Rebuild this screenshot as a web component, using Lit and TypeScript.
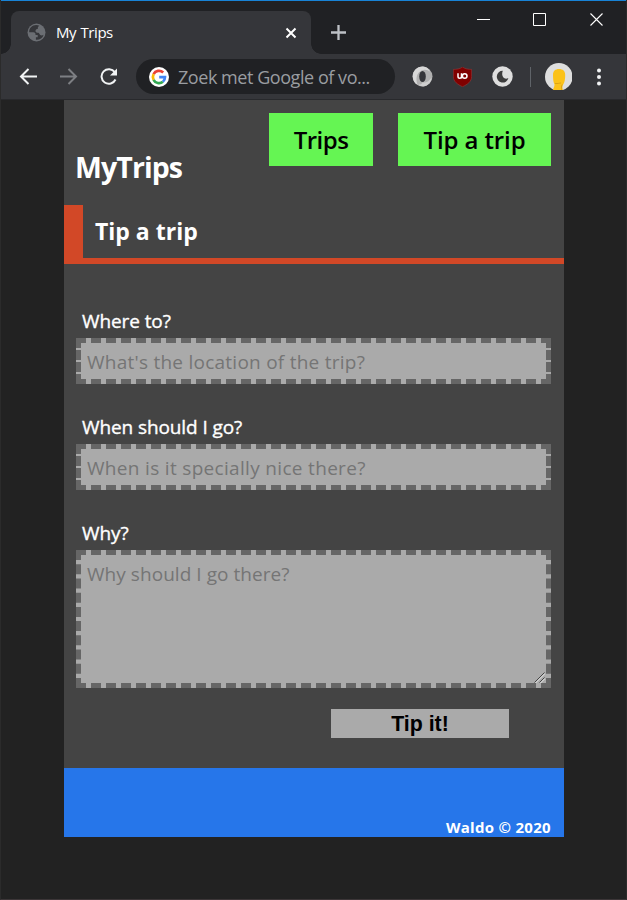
import { LitElement, html, css } from "lit";
import { customElement } from "lit/decorators.js";

@customElement("browser-bar")
class BrowserBar extends LitElement {
  static styles = css`
    :host { display: block; font-family: "Open Sans", "Noto Sans", sans-serif; color: #fff; }
    svg { display: block; flex: none; }
    .strip { height: 53px; border-top: 1px solid #1883d7; background: #202124; display: flex; }
    .tab {
      width: 300px; height: 43px; margin: 10px 0 0 10px; background: #35363a;
      border-radius: 8px 8px 0 0; position: relative; display: flex; align-items: center;
      box-sizing: border-box; padding: 0 14px 0 16px;
    }
    .tab::before, .tab::after {
      content: ""; position: absolute; bottom: 0; width: 10px; height: 10px;
    }
    .tab::before { left: -10px; background: radial-gradient(circle at 0 0, #202124 9.5px, #35363a 10px); }
    .tab::after { right: -10px; background: radial-gradient(circle at 100% 0, #202124 9.5px, #35363a 10px); }
    .title { flex: 1; margin-left: 10px; font-size: 15px; letter-spacing: -0.45px; word-spacing: 1px; line-height: 20px; margin-top: -2px; }
    .plus { margin: 23px 0 0 19px; }
    .win { display: flex; margin: 11px 21px 0 auto; gap: 43px; }
    .win svg { margin-left: -1px; margin-right: 1px; }
    .tools { height: 45px; border-bottom: 1px solid #28292c; background: #35363a; display: flex; align-items: center; }
    .back { margin-left: 18px; }
    .fwd { margin-left: 21px; }
    .reload { margin-left: 21px; }
    .omni {
      margin-left: 17px; width: 259px; height: 35px; border-radius: 18px; background: #202124;
      display: flex; align-items: center; box-sizing: border-box; padding-left: 13px;
      font-size: 18px; color: #9a9da1; white-space: nowrap; letter-spacing: -0.45px;
    }
    .query { margin-left: 9px; line-height: 24px; }
    .ext1 { margin-left: 17px; }
    .ext2, .ext3 { margin-left: 20px; }
    .sep { width: 1px; height: 20px; background: #5f6368; margin-left: 17px; }
    .avatar { margin-left: 14px; }
    .menu { margin-left: 24px; }
  `;

  render() {
    return html`
      <div class="strip">
        <div class="tab">
          <svg width="19" height="19" viewBox="0 0 19 19">
            <circle cx="9.5" cy="9.5" r="9" fill="#6b6e73" />
            <path d="M4 4.2C2.6 5.6 2 7.4 2.2 9.3h4.1c1.7 0 2.4 1.2 2.2 2.6h2.2v2.4H8.9v2.5c3.6.3 6.8-1.7 7.7-5.1-1.2 1-2.5.9-3.4.3-.9-.7-.8-2-1.9-2.2-1.8-.2-2.9-.7-2.8-2.1.1-1.3 1-1.8 2.3-1.8-.1-1.7.4-2.5 1.6-3.2C9.5 1.5 6.1 2 4 4.2z" fill="#35363a" />
          </svg>
          <span class="title">My Trips</span>
          <svg width="12" height="12" viewBox="0 0 12 12" stroke="#fff" stroke-width="2">
            <path d="M1.5 1.5l9 9M10.5 1.5l-9 9" />
          </svg>
        </div>
        <svg class="plus" width="17" height="17" viewBox="0 0 17 17" stroke="#bdc1c6" stroke-width="2.300" fill="none">
          <path d="M8.5 1v15M1 8.500h15" />
        </svg>
        <div class="win">
          <svg width="13" height="13" stroke="#fff" fill="none"><path d="M0 7.500h13" /></svg>
          <svg width="13" height="14" stroke="#fff" fill="none"><path d="M.5 1.500h12v12H.5z" /></svg>
          <svg width="15" height="14" stroke="#fff" stroke-width="1.1" fill="none"><path d="M1.500 1.500l12 12M13.500 1.500l-12 12" /></svg>
        </div>
      </div>
      <div class="tools">
        <svg class="back" width="19" height="17" viewBox="0 0 19 17" stroke="#f1f3f4" stroke-width="2" fill="none">
          <path d="M18 8.500H2.500M9.500 1L2 8.500l7.500 7.500" />
        </svg>
        <svg class="fwd" width="19" height="17" viewBox="0 0 19 17" stroke="#7d7f83" stroke-width="2" fill="none">
          <path d="M1 8.500h15.500M9.500 1L17 8.500 9.500 16" />
        </svg>
        <svg class="reload" width="20" height="18" viewBox="0 0 20 18">
          <path d="M15.800 4.200A7.300 7.300 0 1 0 16.500 11.500" stroke="#f1f3f4" stroke-width="2" fill="none" />
          <path d="M18 .5v7h-7z" fill="#f1f3f4" />
        </svg>
        <div class="omni">
          <svg width="20" height="20" viewBox="0 0 20 20">
            <circle cx="10" cy="10" r="10" fill="#fff" />
            <g fill="none" stroke-width="2.700">
              <path d="M14.200 5.400A6.100 6.100 0 0 0 4.600 7.200" stroke="#ea4335" />
              <path d="M4.600 7.200a6.100 6.100 0 0 0 0 5.600" stroke="#fbbc05" />
              <path d="M4.600 12.800a6.100 6.100 0 0 0 9.300 2" stroke="#34a853" />
              <path d="M13.900 14.800c1.500-1.200 2.100-2.800 2.100-4.700h-5.800" stroke="#4285f4" />
            </g>
          </svg>
          <span class="query">Zoek met Google of vo...</span>
        </div>
        <svg class="ext1" width="21" height="21" viewBox="0 0 21 21">
          <circle cx="10.500" cy="10.500" r="10" fill="#b0b0b0" />
          <path d="M11 .5C4.500 .5 .8 5 .8 10.500c0 4 2 7 5 8.500-2.500-5-1.500-12 3.700-14.500 3.200-1.300 7-.5 8.500 1.300C16.500 2.500 14.500 .8 11 .5z" fill="#d8d8d8" />
          <path d="M10.500 16.500c4 .5 7-1.500 9-5-.2 4.500-3.500 8.300-8 9-2 0-4-.8-5-2 1.500 0 3 .2 4-2z" fill="#cfcfcf" />
          <ellipse cx="10.500" cy="10.500" rx="3.300" ry="5.500" fill="#35363a" />
        </svg>
        <svg class="ext2" width="19" height="20" viewBox="0 0 19 20">
          <path d="M9.500 0C7 1.900 3.500 2.400 .4 2.400v7.200c0 5 4.300 8 9.100 10.100 4.800-2.100 9.100-5.100 9.100-10.100V2.400C15.500 2.400 12 1.900 9.500 0z" fill="#800000" stroke="#a33b3b" stroke-width=".5" />
          <path d="M5 6.300v3.200a1.750 1.750 0 0 0 3.500 0M8.500 6.300v5.200" fill="none" stroke="#fff" stroke-width="1.500" />
          <circle cx="11.700" cy="9" r="2.300" fill="none" stroke="#fff" stroke-width="1.500" />
        </svg>
        <svg class="ext3" width="21" height="21" viewBox="0 0 21 21">
          <circle cx="10.500" cy="10.500" r="10.200" fill="#dedede" />
          <path d="M10.800 4.800a5.900 5.900 0 1 0 5.600 7.300c-2.200 1-4 .6-5.200-.8-1.300-1.700-1.300-4-.4-6.500z" fill="#3c3c3c" />
        </svg>
        <span class="sep"></span>
        <svg class="avatar" width="27" height="27" viewBox="0 0 27 27">
          <circle cx="13.800" cy="13.800" r="13.800" fill="#dedede" />
          <path d="M8 12c0-4 2.200-6 6-6s6.300 2 6.200 6c0 4-.5 7.500-2 9.500-1 1.500-1 3.500-.4 5.500H8c.5-2 1.500-3.500 1.500-5.500C8.300 19 8 15.500 8 12z" fill="#fbc219" />
          <path d="M10 20.500h3c1 0 1.500-.5 3-.5M17.200 21.500c-1 1.500-.8 3.500-.4 5.500" fill="none" stroke="#dca313" />
        </svg>
        <svg class="menu" width="6" height="18" viewBox="0 0 6 18" fill="#f1f3f4">
          <circle cx="3" cy="2.500" r="2" /><circle cx="3" cy="9" r="2" /><circle cx="3" cy="15.500" r="2" />
        </svg>
      </div>
    `;
  }
}

@customElement("app-root")
class AppRoot extends LitElement {
  static styles = css`
    :host {
      display: block; box-sizing: border-box; height: 900px; background: #222;
      border-left: 1px solid #2b2b2b; border-right: 1px solid #2b2b2b; border-bottom: 1px solid #3c3638;
      overflow: hidden;
      font-family: "Trebuchet MS", "Open Sans", sans-serif;
    }
    .page { width: 500px; margin: 0 0 0 63px; background: #444; color: #fff; }
    .head { height: 105px; display: flex; align-items: flex-start; box-sizing: border-box; padding: 13px 13px 0 11px; }
    h1 { margin: 34px auto 0 0; font-size: 28.500px; line-height: 40px; font-weight: 700; letter-spacing: -0.900px; }
    nav { display: flex; gap: 25px; }
    .link {
      height: 53px; display: flex; align-items: center; justify-content: center;
      background: #65f553; color: #000; font-size: 24px; font-weight: 600; box-sizing: border-box;
      letter-spacing: -0.100px;
    }
    .short { width: 104px; letter-spacing: -0.500px; }
    .long { width: 153px; }
    h2 {
      margin: 0; height: 59px; box-sizing: border-box; border-left: 19px solid #d24827;
      border-bottom: 6px solid #d24827; padding-left: 12px; font-size: 23px; line-height: 53px;
      font-weight: 700;
    }
    form { height: 504px; box-sizing: border-box; padding: 42px 13px 0 12px; display: flex; flex-direction: column; }
    label {
      font-size: 19px; line-height: 30px; height: 32px; padding-left: 6px; letter-spacing: -0.100px;
      -webkit-text-stroke: 0.350px #fff;
    }
    input, textarea {
      box-sizing: border-box; display: block; width: 475px; margin: 0; border: 5px dashed #666;
      border-radius: 0; background: #aaa; outline: none; color: #000; font-family: inherit;
      font-size: 19px; line-height: 26px; padding: 6px;
    }
    input { height: 46px; margin-bottom: 28px; padding: 2px 6px 0; }
    .where { letter-spacing: 0.250px; }
    .when { letter-spacing: 0.320px; }
    textarea { height: 138px; resize: none; letter-spacing: 0.050px; }
    ::placeholder { color: #757575; opacity: 1; }
    .area { position: relative; }
    .grip { position: absolute; right: 6px; bottom: 5px; display: block; }
    .submit {
      margin: 21px 42px 0 auto; width: 178px; height: 29px; border: 0; padding: 1px 0 0; background: #aaa;
      color: #000; font: bold 21.300px "Liberation Sans", Arial, sans-serif;
    }
    footer {
      height: 69px; box-sizing: border-box; background: #2676ea; padding: 0 13px 0 0; display: flex;
      justify-content: flex-end; align-items: flex-end; font-size: 15px; line-height: 19px; font-weight: 700;
      letter-spacing: 0.300px;
    }
  `;

  render() {
    return html`
      <browser-bar></browser-bar>
      <div class="page">
        <div class="head">
          <h1>MyTrips</h1>
          <nav>
            <a class="link short">Trips</a>
            <a class="link long">Tip a trip</a>
          </nav>
        </div>
        <h2>Tip a trip</h2>
        <form>
          <label for="where">Where to?</label>
          <input id="where" class="where" placeholder="What's the location of the trip?" />
          <label for="when">When should I go?</label>
          <input id="when" class="when" placeholder="When is it specially nice there?" />
          <label for="why">Why?</label>
          <div class="area">
            <textarea id="why" class="why" placeholder="Why should I go there?"></textarea>
            <svg class="grip" width="11" height="11" viewBox="0 0 11 11" fill="none">
              <path d="M1.500 11L11 1.500M6.500 11L11 6.500" stroke="#e6e6e6" />
              <path d="M.5 10.500L10.500 .5M5.500 10.500L10.500 5.500" stroke="#444" />
            </svg>
          </div>
          <button type="button" class="submit">Tip it!</button>
        </form>
        <footer>Waldo © 2020</footer>
      </div>
    `;
  }
}
